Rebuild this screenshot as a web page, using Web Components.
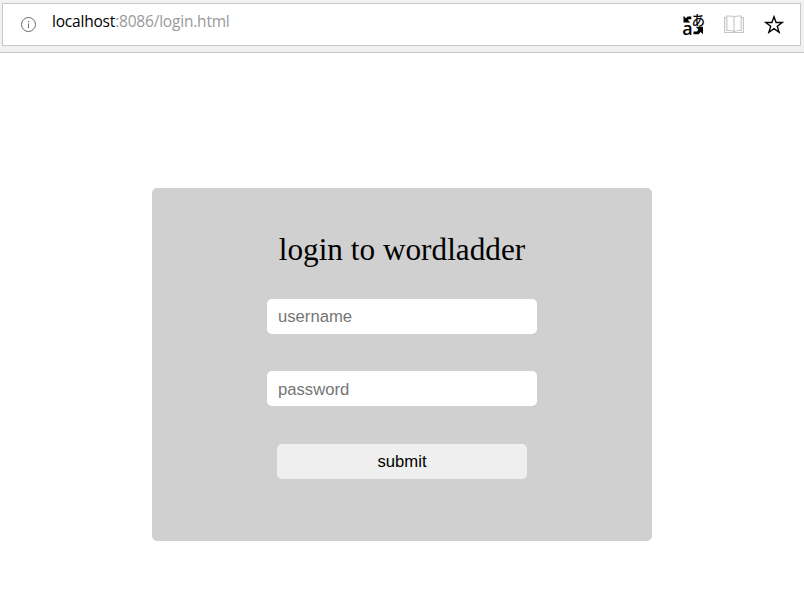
<!DOCTYPE html>
<html lang="en">
<head>
<meta charset="utf-8">
<title>login</title>
<style>
body{margin:0;background:#fff;height:613px;overflow:hidden;font-family:"Liberation Serif",serif}
</style>
</head>
<body>
<app-page>
  <address-bar slot="bar" host="localhost" path=":8086/login.html"></address-bar>
  <login-card>
    <span slot="title">login to wordladder</span>
    <text-field placeholder="username" type="text"></text-field>
    <text-field placeholder="password" type="password"></text-field>
    <submit-button>submit</submit-button>
  </login-card>
</app-page>
<script>
const define = (name, html) => customElements.define(name, class extends HTMLElement {
  constructor() {
    super();
    this.attachShadow({mode: 'open'}).innerHTML = html;
  }
  connectedCallback() {
    this.shadowRoot.querySelectorAll('[data-text]').forEach(n => {
      n.textContent = this.getAttribute(n.dataset.text);
    });
    const input = this.shadowRoot.querySelector('input');
    if (input) {
      input.placeholder = this.getAttribute('placeholder');
      input.type = this.getAttribute('type');
    }
  }
});

define('info-icon', `<style>:host{display:block;width:16px;height:16px}svg{display:block}</style>
<svg width="16" height="16" viewBox="0 0 16 16"><circle cx="8.500" cy="7.500" r="7" fill="none" stroke="#6b6b6b" stroke-width="1"/><path d="M8.500 6.500v4.500M8.500 4v1.200" stroke="#6b6b6b" stroke-width="1"/></svg>`);

define('translate-icon', `<style>:host{display:block;width:24px;height:24px}svg{display:block;overflow:visible}</style>
<svg width="24" height="24" viewBox="0 0 24 24">
<text x="9.600" y="12" font-family="Noto Sans CJK JP,sans-serif" font-weight="500" font-size="13.500">あ</text>
<text x="0.200" y="22" font-family="Open Sans,sans-serif" font-weight="600" font-size="18">a</text>
<path d="M1.500 2.800V9.500H8.400L6.300 7.500V6.300H9.300V3.600H5.600L4 5.200z"/>
<path d="M13.800 13.800H21V21.200L18.700 19L16.600 21.200H11.500V18.600H15.200L16.200 16.300z"/>
</svg>`);

define('book-icon', `<style>:host{display:block;width:20px;height:20px}svg{display:block}</style>
<svg width="20" height="20" viewBox="0 0 20 20" fill="none" stroke="#c4c4c4" stroke-width="1.100">
<path d="M10 2.200C9 1 6.500 .8 2.800 1V15.500C6.500 15.300 9 15.600 10 17C11 15.600 13.500 15.300 17.200 15.500V1C13.500 .8 11 1 10 2.200zM10 2.200V17M2.800 2.500H.6V17.500H19.400V2.500H17.200"/></svg>`);

define('star-icon', `<style>:host{display:block;width:20px;height:20px}svg{display:block}</style>
<svg width="20" height="20" viewBox="0 0 20 20"><path d="M10 1.800L12.100 7.500H18.200L13.300 11.300L15.100 17.200L10 13.600L4.900 17.200L6.700 11.300L1.800 7.500H7.900z" fill="none" stroke="#000" stroke-width="1.400"/></svg>`);

define('address-bar', `<style>
:host{display:block;box-sizing:border-box;height:53px;padding:3px 3px 0 2px;background:#f1f1f1;border-bottom:1px solid #c8c8c8}
.box{box-sizing:border-box;height:43px;display:flex;align-items:center;background:#fff;border:1px solid #c8c8c8;padding:0 16px 0 17px}
.url{flex:1;margin:-7px 0 0 16px;font:15.500px/22px "Open Sans",sans-serif;letter-spacing:-.2px;white-space:nowrap;color:#999}
.host{color:#000}
book-icon{margin:0 20px 0 18px}
</style>
<div class="box"><info-icon></info-icon><div class="url"><span class="host" data-text="host"></span><span data-text="path"></span></div>
<translate-icon></translate-icon><book-icon></book-icon><star-icon></star-icon></div>`);

define('text-field', `<style>
:host{display:block;width:270px;height:35px}
input{display:block;box-sizing:border-box;width:100%;height:100%;border:0;border-radius:5px;padding:0 11px;background:#fff;font:16.670px "Liberation Sans",sans-serif}
:host([type=password]) input{padding-top:2px}
input::placeholder{color:#757575;opacity:1}
</style><input>`);

define('submit-button', `<style>
:host{display:block;width:250px;height:35px}
button{display:block;width:100%;height:100%;border:0;border-radius:5px;padding:2px 0 0;background:#efefef;color:#000;font:16.670px "Liberation Sans",sans-serif}
</style><button type="button"><slot></slot></button>`);

define('login-card', `<style>
:host{box-sizing:border-box;width:500px;height:353px;padding-top:43px;background:#d0d0d0;border-radius:5px;display:flex;flex-direction:column;align-items:center}
.title{font-size:31.250px;line-height:37px;white-space:nowrap;margin-bottom:31px}
.fields{display:flex;flex-direction:column;align-items:center;gap:37.400px}
</style><div class="title"><slot name="title"></slot></div><div class="fields"><slot></slot></div>`);

define('app-page', `<style>
:host{display:block}
main{display:flex;justify-content:center;padding-top:135px}
</style><slot name="bar"></slot><main><slot></slot></main>`);
</script>
</body>
</html>
